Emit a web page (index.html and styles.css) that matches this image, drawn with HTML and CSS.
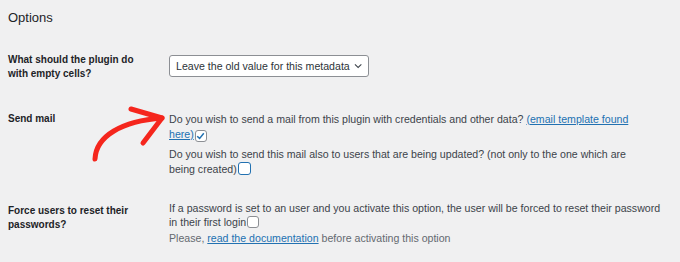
FILE: index.html
```html
<!DOCTYPE html>
<html>
<head>
<meta charset="utf-8">
<link rel="stylesheet" href="styles.css">
</head>
<body>
<div class="wrap">
  <h2 class="title">Options</h2>
  <div class="row row-first">
    <div class="label">What should the plugin do<br>with empty cells?</div>
    <div class="field">
      <div class="select">
        <span>Leave the old value for this metadata</span>
        <svg class="chev" width="9" height="6" viewBox="0 0 9 6"><path d="M1 1.2 L4.5 4.6 L8 1.2" fill="none" stroke="#3c434a" stroke-width="1.1"/></svg>
      </div>
    </div>
  </div>
  <div class="row row-mail">
    <div class="label">Send mail</div>
    <div class="field">
      <p class="desc">Do you wish to send a mail from this plugin with credentials and other data? <a href="#">(email template found<br>here)</a><span class="cb checked"><svg width="9" height="8" viewBox="0 0 9 8"><path d="M1.2 4.2 L3.6 6.4 L7.8 1.2" fill="none" stroke="#2271b1" stroke-width="1.5"/></svg></span></p>
      <p class="desc second">Do you wish to send this mail also to users that are being updated? (not only to the one which are<br>being created)<span class="cb focus"></span></p>
    </div>
  </div>
  <div class="row row-force">
    <div class="label">Force users to reset their<br>passwords?</div>
    <div class="field">
      <p class="desc">If a password is set to an user and you activate this option, the user will be forced to reset their password<br>in their first login<span class="cb"></span></p>
      <p class="note">Please, <a href="#">read the documentation</a> before activating this option</p>
    </div>
  </div>
</div>
<svg class="arrow" width="680" height="262" viewBox="0 0 680 262">
  <path d="M95 159 C 96 136, 122 121, 162 118" fill="none" stroke="#f5261d" stroke-width="5" stroke-linecap="round"/>
  <path d="M131 109 L162 118 L143 143" fill="none" stroke="#f5261d" stroke-width="5" stroke-linecap="round" stroke-linejoin="round"/>
</svg>
</body>
</html>
```

FILE: styles.css
```css
html, body {
  margin: 0;
  padding: 0;
  background: #f0f0f1;
}
body {
  font-family: "Liberation Sans", Arial, sans-serif;
  font-size: 10.6px;
  color: #3c434a;
  width: 680px;
  height: 262px;
  overflow: hidden;
  position: relative;
}
.wrap {
  padding: 10px 0 0 8px;
}
.title {
  margin: 0;
  font-size: 13px;
  line-height: 16px;
  font-weight: 500;
  color: #1d2327;
}
.row {
  display: grid;
  grid-template-columns: 161px 500px;
}
.row-first { margin-top: 27px; }
.row-mail { margin-top: 31px; }
.row-force { margin-top: 24px; }
.label {
  font-size: 10px;
  font-weight: bold;
  color: #1d2327;
  line-height: 14px;
  white-space: nowrap;
}
.row-force .label { padding-top: 3px; }
.select {
  display: inline-flex;
  align-items: center;
  box-sizing: border-box;
  width: 200px;
  height: 22px;
  margin-top: 2px;
  padding: 0 6px 0 6px;
  background: #fff;
  border: 1px solid #8c8f94;
  border-radius: 3px;
  color: #2c3338;
  white-space: nowrap;
  gap: 4px;
}
.select span {
  flex: 1;
}
.chev { display: block; }
.desc {
  margin: 0;
  line-height: 15px;
  white-space: nowrap;
}
.second { margin-top: 5px; }
.row-force .desc { line-height: 14px; }
.note {
  margin: 2px 0 0;
  line-height: 15px;
  color: #646970;
  white-space: nowrap;
}
a {
  color: #2271b1;
  text-decoration: underline;
}
.cb {
  display: inline-flex;
  align-items: center;
  justify-content: center;
  box-sizing: border-box;
  width: 12px;
  height: 12px;
  vertical-align: -2px;
  margin-left: 1px;
  background: #fff;
  border: 1px solid #8c8f94;
  border-radius: 3px;
}
.cb.focus {
  border: 1.5px solid #2271b1;
  width: 13px;
  height: 13px;
}
.cb svg { display: block; }
.arrow {
  position: absolute;
  left: 0;
  top: 0;
  pointer-events: none;
}
```
